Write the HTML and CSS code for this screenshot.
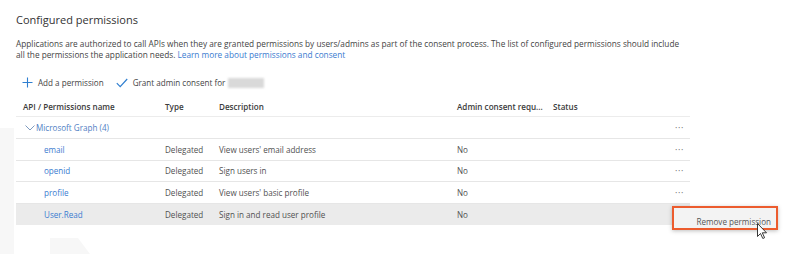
FILE: index.html
```html
<!DOCTYPE html>
<html lang="en">

<head>
    <meta charset="UTF-8">
    <meta name="viewport" content="width=device-width, initial-scale=1.0">
    <title>Configured permissions</title>
    <link rel="stylesheet" href="styles.css">
</head>

<body>

    <!-- faint background shapes -->
    <div class="shape shape-left"></div>
    <div class="shape shape-bottom"></div>

    <div class="page">
        <h2 class="title">Configured permissions</h2>
        <p class="intro">
            Applications are authorized to call APIs when they are granted permissions by users/admins as part of the consent process. The list of configured permissions should include
            all the permissions the application needs. <a href="#">Learn more about permissions and consent</a>
        </p>

        <div class="toolbar">
            <span class="tool">
                <svg width="11" height="11" viewBox="0 0 11 11"><path d="M5.5 0.5v10M0.5 5.5h10" stroke="#2f7fd0" stroke-width="1.1" fill="none"/></svg>
                Add a permission
            </span>
            <span class="tool">
                <svg width="12" height="10" viewBox="0 0 12 10"><path d="M0.8 5.2l3.4 3.4L11.2 1" stroke="#2f7fd0" stroke-width="1.2" fill="none"/></svg>
                Grant admin consent for <span class="blur-box"></span>
            </span>
        </div>

        <div class="table">
            <div class="row head">
                <span>API / Permissions name</span>
                <span>Type</span>
                <span>Description</span>
                <span>Admin consent requ...</span>
                <span>Status</span>
                <span></span>
            </div>
            <div class="row group">
                <span class="group-name">
                    <svg width="10" height="6" viewBox="0 0 10 6"><path d="M0.5 0.5l4.5 4.5 4.5-4.5" stroke="#6f8fb8" stroke-width="0.9" fill="none"/></svg>
                    Microsoft Graph (4)
                </span>
                <span></span>
                <span></span>
                <span></span>
                <span></span>
                <span class="more">&middot;&middot;&middot;</span>
            </div>
            <div class="row">
                <a class="perm" href="#">email</a>
                <span>Delegated</span>
                <span>View users' email address</span>
                <span>No</span>
                <span></span>
                <span class="more">&middot;&middot;&middot;</span>
            </div>
            <div class="row">
                <a class="perm" href="#">openid</a>
                <span>Delegated</span>
                <span>Sign users in</span>
                <span>No</span>
                <span></span>
                <span class="more">&middot;&middot;&middot;</span>
            </div>
            <div class="row">
                <a class="perm" href="#">profile</a>
                <span>Delegated</span>
                <span>View users' basic profile</span>
                <span>No</span>
                <span></span>
                <span class="more">&middot;&middot;&middot;</span>
            </div>
            <div class="row selected">
                <a class="perm" href="#">User.Read</a>
                <span>Delegated</span>
                <span>Sign in and read user profile</span>
                <span>No</span>
                <span></span>
                <span class="more">&middot;&middot;&middot;</span>
            </div>
        </div>
    </div>

    <!-- context menu over the table -->
    <div class="menu">Remove permission</div>
    <svg class="cursor" width="11" height="16" viewBox="0 0 11 16">
        <path d="M0.5 0.5v13l3-3 2.3 5 1.8-0.8-2.3-4.9h4.2z" fill="#fff" stroke="#222" stroke-width="0.9" stroke-linejoin="round"/>
    </svg>

</body>

</html>
```

FILE: styles.css
```css
body {
    margin: 0;
    font-family: "Open Sans", "Noto Sans", sans-serif;
    color: #4a4a4a;
    background-color: #fff;
    position: relative;
    height: 254px;
    overflow: hidden;
}

.shape {
    position: absolute;
    background-color: #f7f7f7;
}

.shape-left {
    left: 0;
    top: 128px;
    width: 14px;
    height: 126px;
}

.shape-bottom {
    left: 50px;
    top: 238px;
    width: 40px;
    height: 16px;
    clip-path: polygon(0 0, 70% 0, 100% 100%, 0 100%);
}

.page {
    position: relative;
    padding: 12px 0 0 16px;
    width: 674px;
}

.title {
    margin: 0;
    font-size: 11px;
    font-weight: normal;
    color: #333;
    line-height: 16px;
}

.intro {
    margin: 10px 0 0;
    font-size: 8.25px;
    line-height: 11.4px;
    color: #444;
    width: 670px;
}

.intro a {
    display: inline-block;
    line-height: 11px;
    color: #3a7bd0;
    text-decoration: none;
}

.toolbar {
    display: flex;
    align-items: center;
    gap: 12px;
    margin-top: 15px;
    padding-left: 6px;
    font-size: 8.1px;
    color: #444;
    height: 14px;
}

.tool {
    display: flex;
    align-items: center;
    gap: 5px;
}

.blur-box {
    display: inline-block;
    width: 36px;
    height: 10px;
    background-color: #d9d9d9;
    filter: blur(0.8px);
    margin-left: -2px;
}

.table {
    margin-top: 6px;
    font-size: 8.1px;
}

.row {
    display: grid;
    grid-template-columns: 142px 54px 238px 96px 112px 32px;
    align-items: center;
    height: 21.6px;
    border-bottom: 1px solid #e6e6e6;
    box-sizing: border-box;
    padding-left: 7px;
    color: #505050;
}

.row.head {
    font-weight: 600;
    color: #3c3c3c;
    border-bottom-color: #ececec;
}

.row.selected {
    background-color: #ebebeb;
    border-bottom: none;
}

.group-name {
    display: flex;
    align-items: center;
    gap: 1px;
    margin-left: 2px;
    color: #4f80c4;
}

.perm {
    color: #3a7bd0;
    text-decoration: none;
    padding-left: 21px;
}

.more {
    color: #666;
    font-size: 9px;
    letter-spacing: 0.6px;
    text-align: right;
    padding-right: 13px;
}

.menu {
    position: absolute;
    left: 672px;
    top: 206px;
    width: 106px;
    height: 24px;
    box-sizing: border-box;
    border: 2px solid #ec5c2e;
    background-color: #f3f3f3;
    box-shadow: 0 1px 4px rgba(0, 0, 0, 0.25);
    font-family: "Open Sans", sans-serif;
    font-size: 8.1px;
    color: #555;
    text-align: right;
    padding: 8px 5px 0 0;
}

.cursor {
    position: absolute;
    left: 757px;
    top: 223px;
}
```
